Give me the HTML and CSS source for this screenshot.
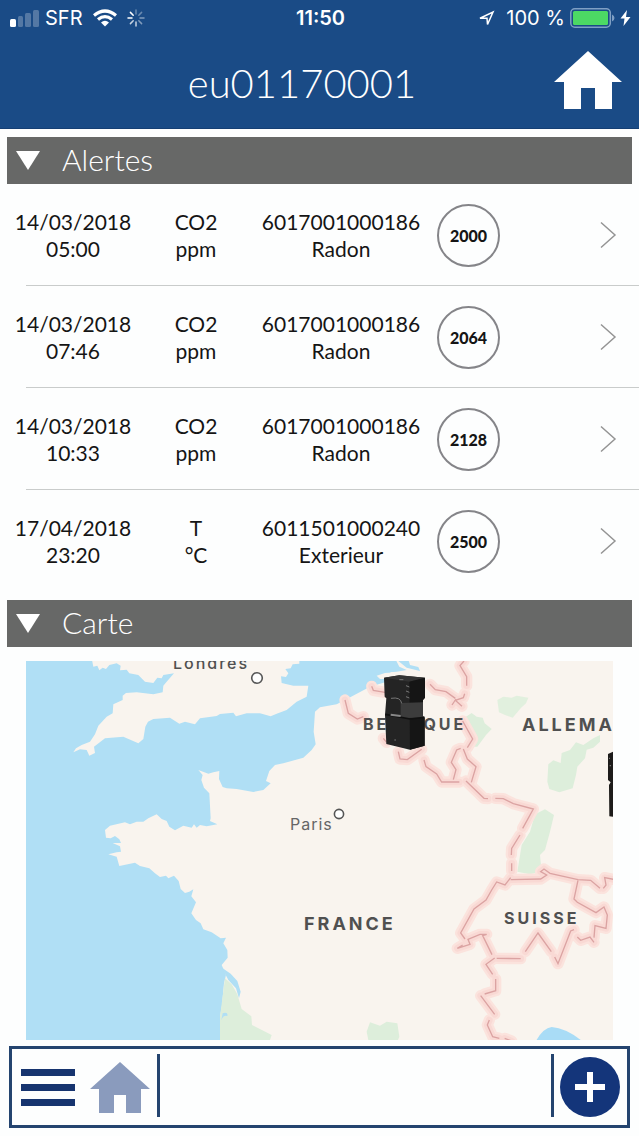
FILE: index.html
```html
<!DOCTYPE html>
<html lang="fr">
<head>
<meta charset="utf-8">
<meta name="viewport" content="width=device-width, initial-scale=1">
<title>eu01170001</title>
<link rel="stylesheet" href="styles.css">
</head>
<body>
<header class="header">
  <div class="status">
    <div class="status-left">
      <svg class="signal" width="29" height="17" viewBox="0 0 29 17" aria-hidden="true">
        <rect x="0" y="9" width="6" height="8" rx="1.5" fill="#fff"/>
        <g fill="#fff" opacity=".25"><rect x="8" y="6" width="5" height="11" rx="1.5"/><rect x="15" y="3" width="6" height="14" rx="1.5"/><rect x="23" y="0" width="6" height="17" rx="1.5"/></g>
      </svg>
      <span>SFR</span>
      <svg class="wifi" width="24" height="18" viewBox="0 0 24 18" fill="none" stroke="#fff" stroke-width="3.2" aria-hidden="true">
        <path d="M1 6.5Q12-2.500 23 6.500"/><path d="M5 10.500Q12 4.800 19 10.500"/><path d="M12 17.500L8 13.400Q12 10.300 16 13.400Z" fill="#fff" stroke="none"/>
      </svg>
      <svg width="18" height="18" viewBox="-9 -9 18 18" stroke="#fff" stroke-width="1.500" stroke-linecap="round" aria-hidden="true">
        <path d="M-4 0H-8M-2.800-2.800L-5.600-5.600"/><path d="M0-4V-8M2.800-2.800L5.600-5.600" opacity=".35"/><path d="M4 0H8M2.800 2.800L5.600 5.600" opacity=".45"/><path d="M0 4V8M-2.800 2.800L-5.600 5.600" opacity=".75"/>
      </svg>
    </div>
    <time class="clock">11:50</time>
    <div class="status-right">
      <svg class="locate" width="17" height="17" viewBox="0 0 17 17" fill="none" stroke="#fff" stroke-width="1.500" stroke-linejoin="miter" aria-hidden="true"><path d="M2 8.200L15 2L9.500 14.500L9 8.200Z"/></svg>
      <span>100 %</span>
      <svg width="45" height="20" viewBox="0 0 45 20" aria-hidden="true">
        <rect x=".8" y=".8" width="39.500" height="18.400" rx="4" fill="none" stroke="#7f9fc4" stroke-width="1.500"/><rect x="3" y="3" width="35" height="14" rx="1.500" fill="#4cd964"/><path d="M42 6.500Q44.500 7.500 44.500 10T42 13.500Z" fill="#7f9fc4"/>
      </svg>
      <svg class="bolt" width="11" height="16" viewBox="0 0 11 16" aria-hidden="true"><path d="M7 0L.5 8.500H4.500L3.500 16L10.500 7H6Z" fill="#fff"/></svg>
    </div>
  </div>
  <div class="title-row">
    <h1>eu01170001</h1>
    <button class="icon-button" type="button" aria-label="Accueil">
      <svg width="68" height="58" viewBox="0 0 68 58" aria-hidden="true"><path d="M34 0L68 31H58V58H41V37H27V58H10V31H0Z" fill="#fff"/></svg>
    </button>
  </div>
</header>
<main>
  <section>
    <h2><button class="section-bar" type="button" aria-expanded="true">
      <svg width="24" height="19" viewBox="0 0 24 19" aria-hidden="true"><path d="M0 0H24L12 19Z" fill="#fff"/></svg>
      <span>Alertes</span>
    </button></h2>
    <ul class="alerts">
      <li><a href="#a1">
        <span>14/03/2018<br>05:00</span><span>CO2<br>ppm</span><span>6017001000186<br>Radon</span><b class="value">2000</b>
        <svg class="chevron" width="17" height="28" viewBox="0 0 17 28" aria-hidden="true"><path d="M1 1.500L15 14L1 26.500"/></svg>
      </a></li>
      <li><a href="#a2">
        <span>14/03/2018<br>07:46</span><span>CO2<br>ppm</span><span>6017001000186<br>Radon</span><b class="value">2064</b>
        <svg class="chevron" width="17" height="28" viewBox="0 0 17 28" aria-hidden="true"><path d="M1 1.500L15 14L1 26.500"/></svg>
      </a></li>
      <li><a href="#a3">
        <span>14/03/2018<br>10:33</span><span>CO2<br>ppm</span><span>6017001000186<br>Radon</span><b class="value">2128</b>
        <svg class="chevron" width="17" height="28" viewBox="0 0 17 28" aria-hidden="true"><path d="M1 1.500L15 14L1 26.500"/></svg>
      </a></li>
      <li><a href="#a4">
        <span>17/04/2018<br>23:20</span><span>T<br>°C</span><span>6011501000240<br>Exterieur</span><b class="value">2500</b>
        <svg class="chevron" width="17" height="28" viewBox="0 0 17 28" aria-hidden="true"><path d="M1 1.500L15 14L1 26.500"/></svg>
      </a></li>
    </ul>
  </section>
  <section>
    <h2><button class="section-bar" type="button" aria-expanded="true">
      <svg width="24" height="19" viewBox="0 0 24 19" aria-hidden="true"><path d="M0 0H24L12 19Z" fill="#fff"/></svg>
      <span>Carte</span>
    </button></h2>
    <svg class="map" viewBox="0 0 587 379" role="img" aria-label="Carte des appareils">
      <rect width="587" height="379" fill="#b0dff5"/>
      <g transform="translate(-6 -6) scale(.33333)">
        <g fill="#f9f4ee">
          <path d="M215 10L220 35L232 32L238 46L248 38L258 42L268 30L290 25L302 32L300 46L320 44L328 55L355 60L375 80L400 84L412 68L425 70L430 60L462 55L440 80L430 92L428 112L400 118L350 112L318 114L308 122L308 135L280 148L278 175L260 185L235 212L225 238L210 260L185 270L168 280L160 292L180 283L200 285L208 302L225 294L222 275L255 250L310 245L355 265L370 252L376 215L384 200L400 192L450 188L478 206L495 200L525 208L540 190L590 183L600 177L640 173L648 184L680 175L720 175L752 184L770 176L800 165L830 140L860 125L865 92L820 92L785 84L783 64L798 66L805 55L796 42L812 40L818 28L838 26V10Z"/>
          <path d="M1125 10L1138 35L1160 45L1130 50L1110 52L1125 62L1095 82L1050 95L975 135L950 148L900 157L885 170L881 230L887 268L875 285L850 308L790 325L765 330L748 348L738 378L752 385L730 405L700 411L650 402L620 400L608 396L597 372L598 348L580 352L565 356L535 345L548 360L544 375L552 398L568 415L572 490L570 498L592 508L560 514L540 510L530 518L522 508L515 518L490 512L465 526L448 515L440 498L425 492L410 478L385 490L370 500L350 500L330 508L315 502L270 512L255 525L258 548L272 550L285 543L298 553L303 564L278 564L300 574L303 590L290 592L265 598L290 605L298 633L345 623L360 633L388 640L405 655L420 666L438 662L445 670L462 662L476 678L482 702L495 714L508 710L520 703L514 724L528 742L514 775L528 795L542 805L550 823L575 832L602 850L618 848L610 865L622 885L623 908L605 930L618 960L612 985L606 1050L600 1085V1170H1800V10Z"/>
          <path d="M1070 62L1095 54L1130 52L1125 64L1110 72L1080 72Z"/>
        </g>
        <path d="M1130 14L1160 38L1200 48L1195 36L1170 30L1165 14Z" fill="#b0dff5"/>
        <path d="M606 938L632 956L652 978L662 1010L657 1030L648 1000L625 975Z" fill="#b0dff5"/>
        <g fill="#ddeedb">
          <path d="M615 970L635 988L652 1018L665 1062L694 1084L696 1110L755 1140L745 1170H600V1085Z"/>
          <path d="M1432 135L1450 125L1475 128L1490 122L1525 128L1518 145L1502 160L1478 188L1455 180L1437 172Z" opacity=".85"/>
          <path d="M1338 185L1355 174L1370 185L1388 188L1394 205L1415 222L1398 240L1372 275L1345 275L1358 253L1332 200Z"/>
          <path d="M1720 250L1740 240L1740 260L1720 278L1700 284L1695 310L1672 335L1668 360L1658 400L1618 412L1588 402L1582 380L1585 328L1600 316L1622 324L1625 294L1650 285L1668 262L1690 270Z"/>
          <path d="M1545 478L1575 463L1602 480L1590 530L1575 585L1560 600L1565 650L1530 658L1492 650L1505 570L1530 530Z"/>
          <path d="M1050 1102L1080 1112L1100 1100L1132 1105L1138 1145L1128 1170H1048L1040 1130Z"/>
        </g>
        <path d="M608 1075Q625 1070 622 1083Q608 1080 604 1096Z" fill="#b0dff5"/>
        <path d="M1542 1170Q1565 1120 1595 1116Q1645 1120 1700 1170Z" fill="#a9dcf6"/>
        <defs>
          <g id="borders">
            <path d="M975 135L985 175L1012 192L1030 185"/><path d="M1055 94L1060 106L1095 112"/><path d="M1332 18L1320 32L1340 65V92M1334 116L1330 128L1306 136L1326 154M1230 88L1246 104L1278 110L1306 130M1308 132L1296 150"/>
            <path d="M1328 198L1358 252L1342 278"/><path d="M1090 250L1100 262M1135 290L1140 312L1162 314L1205 283M1212 315L1218 335L1250 357L1265 381L1318 381M1322 280L1310 285L1294 322L1308 344L1300 374M1330 282L1342 312L1368 335L1354 382"/>
            <path d="M1338 378L1392 430L1404 431M1426 430L1450 431L1480 446L1540 462L1508 520M1500 540L1475 580L1474 600M1475 625V648"/>
            <path d="M1472 668L1455 690L1430 681L1415 705L1398 735L1362 762L1322 834L1335 852"/><path d="M1472 674L1562 672L1580 660L1562 650L1572 642L1590 655L1674 674L1712 676L1740 700"/><path d="M1750 700L1758 690L1754 668L1785 674M1674 676L1662 732L1672 742L1728 773L1752 756L1762 780L1758 820L1725 812L1722 848M1722 862L1710 846L1682 856L1672 846M1662 824L1652 828L1614 926L1604 906M1594 890L1554 834L1516 890M1502 911L1430 910M1416 899L1388 842L1400 838L1380 838L1344 853L1350 868L1312 880L1328 870"/>
            <path d="M1424 909L1398 928L1418 958M1427 972V1007L1394 1017M1382 1022L1424 1078M1408 1095L1402 1110L1418 1145L1438 1150M1454 1150L1475 1158"/>
          </g>
        </defs>
        <use href="#borders" fill="none" stroke="#fbe3dd" stroke-width="34" stroke-linecap="round" stroke-linejoin="round"/>
        <use href="#borders" fill="none" stroke="#f9d9d4" stroke-width="20" stroke-linecap="round" stroke-linejoin="round"/>
        <use href="#borders" fill="none" stroke="#dba3a2" stroke-width="4"/>
      </g>
      <g class="place">
        <text class="city" x="147" y="8">Londres</text>
        <text class="town" x="264" y="169">Paris</text>
        <text class="country" x="337" y="69">BELGIQUE</text>
        <text class="country large" x="496" y="70">ALLEMA</text>
        <text class="country large" x="278" y="269">FRANCE</text>
        <text class="country" x="478" y="263">SUISSE</text>
      </g>
      <g fill="#fff" stroke="#555" stroke-width="1.600"><circle cx="231" cy="17" r="5.300"/><circle cx="313" cy="153" r="4.600"/></g>
      <g transform="translate(-6 -6) scale(.33333)">
        <g id="device">
          <path d="M1092 68L1138 61L1215 68V128L1209 135V183L1214 190V272L1170 284L1099 267L1095 180L1099 130L1094 125Z" fill="#242424"/>
          <path d="M1092 68L1138 61L1215 68L1168 80Z" fill="#333"/>
          <path d="M1168 80L1215 68V128L1209 135V183L1214 190V272L1170 284Z" fill="#151515"/>
          <path d="M1142 144L1209 142V188L1142 189Z" fill="#3c3c3c"/>
          <path d="M1096 178L1170 192L1214 187" fill="none" stroke="#101010" stroke-width="5"/>
          <path d="M1113 130Q1142 125 1145 145" fill="none" stroke="#777" stroke-width="3"/>
          <path d="M1112 179L1142 183" stroke="#888" stroke-width="6"/>
          <path d="M1138 74H1150M1158 92L1168 96M1158 108L1168 112M1158 125L1168 129M1123 255H1128" stroke="#777" stroke-width="3"/>
        </g>
        <path d="M1764 297L1785 288V486L1768 484L1767 390L1772 382L1764 375Z" fill="#1d1b1a"/>
        <path d="M1767 310H1770M1769 332H1773" stroke="#777" stroke-width="4"/>
      </g>
    </svg>
  </section>
</main>
<footer class="toolbar">
  <button class="icon-button" type="button" aria-label="Menu">
    <svg width="54" height="37" viewBox="0 0 54 37" aria-hidden="true"><path d="M0 0H54V7H0ZM0 15H54V22H0ZM0 30H54V37H0Z" fill="#16346f"/></svg>
  </button>
  <button class="icon-button home-small" type="button" aria-label="Accueil">
    <svg width="60" height="51" viewBox="0 0 60 51" aria-hidden="true"><path d="M30 0L60 27H51V51H36V33H24V51H9V27H0Z" fill="#8a9bbd"/></svg>
  </button>
  <div class="toolbar-space"></div>
  <button class="icon-button" type="button" aria-label="Ajouter">
    <svg width="60" height="60" viewBox="0 0 60 60" aria-hidden="true"><circle cx="30" cy="30" r="30" fill="#14357a"/><path d="M27 15H33V27H45V33H33V45H27V33H15V27H27Z" fill="#fff"/></svg>
  </button>
</footer>
</body>
</html>
```
FILE: styles.css
```css
* { box-sizing: border-box; }

body {
  margin: 0;
  background: #fdfefe;
  color: #151515;
  font-family: "Century Gothic", Lato, sans-serif;
}

button {
  border: 0;
  background: none;
  padding: 0;
  color: inherit;
  font: inherit;
  cursor: pointer;
}

svg { display: block; flex: none; }

h1, h2 { margin: 0; font-weight: 300; }

.header {
  height: 129px;
  background: #1a4b86;
  border-bottom: 1px solid #153f74;
  color: #fff;
}

.status {
  display: grid;
  grid-template-columns: 1fr auto 1fr;
  align-items: center;
  height: 36px;
  padding: 0 8px 0 10px;
  font: 20px/24px Inter, sans-serif;
}

.status-left, .status-right { display: flex; align-items: center; }
.status-left { gap: 6px; }
.status-right { justify-content: flex-end; gap: 5px; }
.wifi { margin: 0 4px; }
.locate { margin-right: 6px; }
.clock { font-weight: 600; }

.title-row {
  display: flex;
  align-items: center;
  padding: 15px 17px 0 50px;
}

.title-row h1 {
  flex: 1;
  padding-top: 6px;
  text-align: center;
  font-size: 40px;
  line-height: 52px;
}

.section-bar {
  display: flex;
  align-items: center;
  gap: 22px;
  width: calc(100% - 14px);
  height: 47px;
  margin: 8px 7px 0;
  padding: 0 9px;
  background: #676867;
  color: #fff;
  font-size: 30px;
  line-height: 40px;
}

.section-bar span { padding-bottom: 3px; }

.alerts { list-style: none; margin: 0; padding: 0; }

.alerts a {
  display: grid;
  grid-template-columns: 146fr 100fr 190fr 65fr 138fr;
  align-items: center;
  height: 101px;
  padding-top: 1px;
  color: inherit;
  text-align: center;
  text-decoration: none;
  font-size: 21px;
  line-height: 27px;
}

.alerts li::after {
  content: "";
  display: block;
  height: 1px;
  margin-left: 26px;
  background: #c9cccb;
}

.alerts li:last-child::after { background: none; }

.value {
  justify-self: center;
  width: 63px;
  height: 63px;
  border: 2px solid #858589;
  border-radius: 50%;
  font-size: 16px;
  font-weight: 900;
  line-height: 59px;
}

.chevron {
  justify-self: end;
  margin-right: 22px;
  fill: none;
  stroke: #949494;
  stroke-width: 1.5;
}

.map {
  width: calc(100% - 52px);
  margin: 14px 26px 0;
}

.place { font-family: Inter, sans-serif; fill: #505050; }
.city { font-size: 16px; font-weight: 500; letter-spacing: 2px; }
.town { font-size: 16px; letter-spacing: 1px; fill: #666; }
.country { font-size: 16px; font-weight: 700; letter-spacing: 3px; }
.large { font-size: 18px; }

.toolbar {
  display: flex;
  align-items: center;
  height: 82px;
  margin: 6px 9px 0;
  padding: 0 7px 0 9px;
  border: 3px solid #24446f;
}

.home-small { margin: 0 7px 0 15px; }

.toolbar-space {
  flex: 1;
  align-self: stretch;
  margin: 5px 6px 8px 0;
  border: solid #24446f;
  border-width: 0 3px;
}
```
